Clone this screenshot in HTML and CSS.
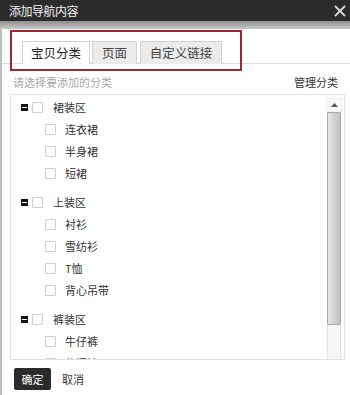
FILE: index.html
```html
<!DOCTYPE html>
<html lang="zh">
<head>
<meta charset="utf-8">
<link rel="stylesheet" href="styles.css">
</head>
<body>
<div class="dialog">
  <div class="titlebar">
    <span class="title">添加导航内容</span>
    <svg class="close" width="12" height="12" viewBox="0 0 12 12"><path d="M1 1L11 11M11 1L1 11" stroke="#d8d8d8" stroke-width="1.8" fill="none"/></svg>
  </div>
  <div class="band"></div>
  <div class="content">
    <div class="tabs">
      <div class="tab active">宝贝分类</div>
      <div class="tab t2">页面</div>
      <div class="tab t3">自定义链接</div>
    </div>
    <div class="redbox"></div>
    <div class="hint">
      <span class="hint-text">请选择要添加的分类</span>
      <span class="manage">管理分类</span>
    </div>
    <div class="list">
      <div class="tree">
        <div class="group">
          <div class="row head"><span class="minus"></span><span class="cb"></span><span class="label">裙装区</span></div>
          <div class="row child"><span class="cb"></span><span class="label">连衣裙</span></div>
          <div class="row child"><span class="cb"></span><span class="label">半身裙</span></div>
          <div class="row child"><span class="cb"></span><span class="label">短裙</span></div>
        </div>
        <div class="group">
          <div class="row head"><span class="minus"></span><span class="cb"></span><span class="label">上装区</span></div>
          <div class="row child"><span class="cb"></span><span class="label">衬衫</span></div>
          <div class="row child"><span class="cb"></span><span class="label">雪纺衫</span></div>
          <div class="row child"><span class="cb"></span><span class="label">T恤</span></div>
          <div class="row child"><span class="cb"></span><span class="label">背心吊带</span></div>
        </div>
        <div class="group">
          <div class="row head"><span class="minus"></span><span class="cb"></span><span class="label">裤装区</span></div>
          <div class="row child"><span class="cb"></span><span class="label">牛仔裤</span></div>
          <div class="row child"><span class="cb"></span><span class="label">休闲裤</span></div>
        </div>
      </div>
      <div class="scrollbar">
        <div class="sb-up"><svg width="7" height="4" viewBox="0 0 7 4"><path d="M0 4L3.5 0L7 4Z" fill="#555"/></svg></div>
        <div class="sb-thumb"></div>
        <div class="sb-rest"></div>
      </div>
    </div>
    <div class="footer">
      <button class="btn ok">确定</button>
      <button class="btn cancel">取消</button>
    </div>
  </div>
</div>
</body>
</html>
```
FILE: styles.css
```css
* { box-sizing: border-box; }
html, body { margin: 0; padding: 0; }
body {
  width: 350px;
  height: 395px;
  overflow: hidden;
  background: #fff;
  font-family: "Noto Sans CJK SC", "Noto Sans", sans-serif;
  color: #333;
}
.dialog { width: 350px; height: 395px; display: flex; flex-direction: column; }
.titlebar {
  height: 21px;
  background: #2c2c2c;
  display: flex;
  align-items: center;
  justify-content: space-between;
  padding: 0 4px 0 9px;
}
.title { color: #f2f2f2; font-size: 12px; line-height: 21px; letter-spacing: -0.5px; }
.close { display: block; }
.band { height: 8px; background: linear-gradient(#8e8e8e, #c9c9c9); }
.content {
  flex: 1;
  position: relative;
  border-left: 2px solid #bdbdbd;
  background: #fff;
}
.tabs {
  margin-top: 12px;
  padding-left: 20px;
  height: 23px;
  display: flex;
  gap: 2px;
  border-bottom: 1px solid #dcdcdc;
}
.tab {
  height: 23px;
  font-size: 12.5px;
  line-height: 21px;
  text-align: center;
  border: 1px solid #d2d2d2;
  border-bottom: none;
  background: #ebebeb;
  color: #444;
}
.tab.active { width: 68px; background: #fff; color: #222; height: 23px; }
.tab.t2 { width: 45px; }
.tab.t3 { width: 82px; margin-left: 1px; }
.redbox {
  position: absolute;
  left: 8px;
  top: 1px;
  width: 232px;
  height: 41px;
  border: 2px solid #a2262d;
  pointer-events: none;
}
.hint {
  margin-top: 10px;
  height: 16px;
  display: flex;
  justify-content: space-between;
  align-items: center;
  padding: 0 12px 0 11px;
  font-size: 11px;
}
.hint-text { color: #a8a8a8; }
.manage { color: #333; }
.list {
  margin: 4px 5px 0 8px;
  height: 266px;
  border: 1px solid #e2e2e2;
  display: flex;
  overflow: hidden;
}
.tree { flex: 1; padding: 1px 0 0 10px; }
.group { margin-bottom: 7px; }
.row {
  height: 22px;
  display: flex;
  align-items: center;
  font-size: 11px;
  color: #333;
}
.minus {
  width: 7px;
  height: 7px;
  background: #111;
  position: relative;
  margin-right: 4px;
}
.minus::after {
  content: "";
  position: absolute;
  left: 1px;
  right: 1px;
  top: 3px;
  height: 1px;
  background: #fff;
}
.cb {
  width: 11px;
  height: 11px;
  border: 1px solid #cfcfcf;
  background: #fff;
  border-radius: 1px;
}
.head .label { margin-left: 10px; }
.child { padding-left: 24px; }
.child .label { margin-left: 9px; }
.scrollbar {
  width: 16px;
  margin-right: 2px;
  padding-top: 3px;
  display: flex;
  flex-direction: column;
}
.sb-up {
  height: 14px;
  display: flex;
  align-items: center;
  justify-content: center;
  background: #fafafa;
  border: 1px solid #eee;
}
.sb-thumb {
  height: 213px;
  margin: 0 1px;
  border: 1px solid #a9a9a9;
  border-radius: 1px;
  background: linear-gradient(90deg, #e6e6e6, #cfcfcf 60%, #c2c2c2);
}
.sb-rest {
  flex: 1;
  margin: 0 1px;
  border-left: 1px solid #e2e2e2;
  border-right: 1px solid #e2e2e2;
  background: #f6f6f6;
}
.footer {
  margin-top: 8px;
  padding-left: 12px;
  display: flex;
  align-items: center;
  gap: 11px;
}
.btn {
  font-family: inherit;
  font-size: 11px;
  border: none;
  padding: 0;
  height: 22px;
  cursor: pointer;
}
.ok { width: 37px; background: #2b2b2b; color: #fff; border-radius: 2px; }
.cancel { background: none; color: #333; }
```
